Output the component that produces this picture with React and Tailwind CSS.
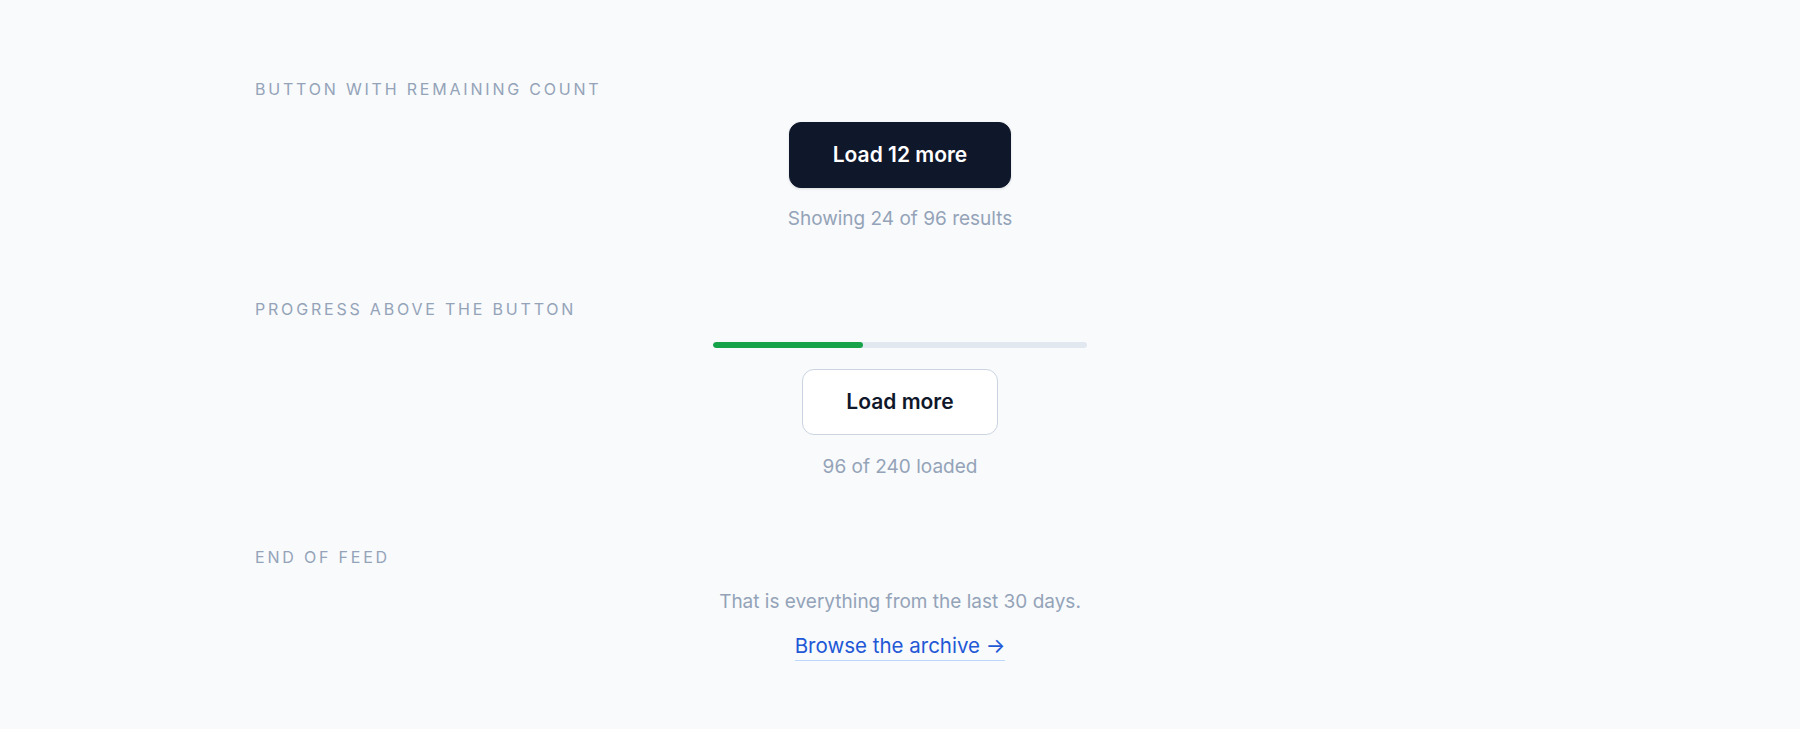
import React from "react";

const Label = ({ children }) => (
  <h3 className="mb-[21px] text-base leading-6 tracking-[0.175em] uppercase text-[#94a3b8]">
    {children}
  </h3>
);

const App = () => {
  const loaded = 96;
  const total = 240;
  const pct = (loaded / total) * 100;

  return (
    <div
      className="min-h-screen bg-[#f8fafc] pt-[77px] pb-16"
      style={{ fontFamily: "Inter, 'Noto Sans', sans-serif" }}
    >
      <div className="mx-auto flex w-[1290px] flex-col gap-16">
        {/* remaining count */}
        <section>
          <Label>Button with remaining count</Label>
          <div className="flex flex-col items-center gap-[17px]">
            <button className="rounded-xl border border-[#0f172a] bg-[#0f172a] px-[43px] py-5 text-[21px] leading-6 font-semibold text-white shadow-sm">
              Load 12 more
            </button>
            <p className="text-[19px] leading-7 text-[#94a3b8]">
              Showing 24 of 96 results
            </p>
          </div>
        </section>

        {/* progress bar */}
        <section>
          <Label>Progress above the button</Label>
          <div className="flex flex-col items-center gap-[17px]">
            <div className="mb-[4px] h-1.5 w-[374px] overflow-hidden rounded-full bg-[#e2e8f0]">
              <div
                className="h-full rounded-full bg-[#16a34a]"
                style={{ width: `${pct}%` }}
              />
            </div>
            <button className="rounded-xl border border-[#cbd5e1] bg-white px-[43px] py-5 text-[21px] leading-6 font-semibold text-[#0f172a]">
              Load more
            </button>
            <p className="mt-px text-[19px] leading-7 text-[#94a3b8]">
              {loaded} of {total} loaded
            </p>
          </div>
        </section>

        {/* end of feed */}
        <section>
          <Label>End of feed</Label>
          <div className="-mt-[2px] flex flex-col items-center gap-4">
            <p className="text-[19px] leading-7 text-[#94a3b8]">
              That is everything from the last 30 days.
            </p>
            <a
              href="#"
              className="border-b-[1.5px] border-[#bfd6fb] text-[20.5px] leading-7 text-[#2257d6]"
            >
              Browse the archive →
            </a>
          </div>
        </section>
      </div>
    </div>
  );
};

export default App;
